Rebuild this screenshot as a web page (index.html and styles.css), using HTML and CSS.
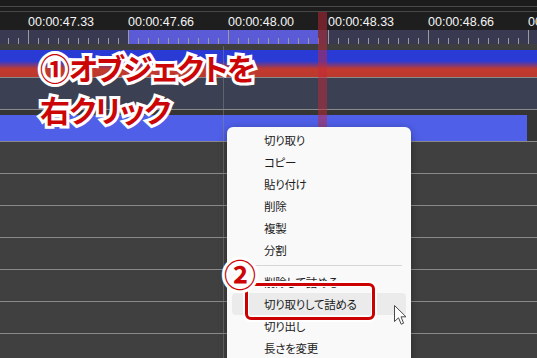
FILE: index.html
```html
<!DOCTYPE html>
<html lang="ja">
<head>
    <meta charset="UTF-8">
    <title>タイムライン - 切り取りして詰める</title>
    <link rel="stylesheet" href="styles.css">
</head>
<body>
    <div class="screen">
        <div class="topbar"></div>

        <div class="timecodes">
            <span class="tc">00:00:47.33</span>
            <span class="tc">00:00:47.66</span>
            <span class="tc">00:00:48.00</span>
            <span class="tc">00:00:48.33</span>
            <span class="tc">00:00:48.66</span>
            <span class="tc">00:0</span>
        </div>
        <div class="ruler"></div>
        <div class="ruler-gap"></div>

        <div class="track track-grad"></div>
        <div class="track track-empty"></div>
        <div class="track track-short">
            <div class="clip"></div>
        </div>

        <div class="row"></div>
        <div class="row"></div>
        <div class="row"></div>
        <div class="row"></div>
        <div class="row"></div>
        <div class="row"></div>
        <div class="row"></div>

        <!-- overlays -->
        <div class="gridline"></div>
        <div class="playhead"></div>

        <div class="note note-1">①オブジェクトを<br>右クリック</div>

        <ul class="menu">
            <li class="item">切り取り</li>
            <li class="item">コピー</li>
            <li class="item">貼り付け</li>
            <li class="item">削除</li>
            <li class="item">複製</li>
            <li class="item">分割</li>
            <li class="sep"></li>
            <li class="item">削除して詰める</li>
            <li class="item hover">切り取りして詰める</li>
            <li class="item">切り出し</li>
            <li class="item">長さを変更</li>
        </ul>

        <div class="mark-box"></div>
        <div class="note note-2">②</div>

        <svg class="cursor" width="14" height="21" viewBox="0 0 14 21">
            <path d="M0.5 0.5 L0.5 16.5 L4.5 12.8 L7.2 19.2 L9.6 18.2 L7 11.8 L12 11.8 Z" fill="#fff" stroke="#4a4a4a" stroke-width="1" stroke-linejoin="round"/>
        </svg>
    </div>
</body>
</html>
```

FILE: styles.css
```css
:root {
    --rule-line: #8a8a8a;
    --row-bg: #404040;
    --note-red: #cc0606;
}

body {
    margin: 0;
    padding: 0;
    background: #1c1c1c;
}

.screen {
    position: relative;
    width: 537px;
    height: 358px;
    overflow: hidden;
    background: #1c1c1c;
    font-family: "Liberation Sans", Arial, sans-serif;
}

.topbar {
    height: 12px;
    box-sizing: border-box;
    border-top: 6px solid #1c1c1c;
    background: linear-gradient(to bottom, #4a4a4a 0, #4a4a4a 1px, #1c1c1c 1px, #1c1c1c 5px, #474747 5px);
}

.timecodes {
    display: flex;
    height: 18px;
    padding-left: 28px;
    box-sizing: border-box;
    background: #1e1e1e;
    color: #f4f4f4;
    font-size: 12.5px;
    line-height: 16px;
    padding-top: 2px;
    white-space: nowrap;
    overflow: hidden;
}

.tc {
    flex: 0 0 100px;
}

.ruler {
    height: 14px;
    background-color: #393a52;
    background-image:
        linear-gradient(to right, #9b9b9b 1px, transparent 1px),
        linear-gradient(to right, #9b9b9b 1px, transparent 1px),
        linear-gradient(to right, transparent 128px, #5b5bd8 128px, #5b5bd8 318px, transparent 318px);
    background-size: 100px 14px, 10px 6px, 537px 14px;
    background-position: 28px 0, 8px 8px, 0 0;
    background-repeat: repeat-x, repeat-x, no-repeat;
}

.ruler-gap {
    height: 6px;
    background: #3e3e3e;
}

.track {
    border-bottom: 1px solid var(--rule-line);
}

.track-grad {
    height: 27px;
    background: linear-gradient(to bottom, #2a3ad4 0, #2a3ad4 11px, #c23a2e 19px, #bb392e 100%);
}

.track-empty {
    height: 31px;
    background: #3b4153;
}

.track-short {
    height: 26px;
    padding-top: 5px;
    background: #353535;
}

.clip {
    width: 527px;
    height: 26px;
    background: #4f5fe8;
}

.row {
    height: 31px;
    background: var(--row-bg);
    border-bottom: 1px solid var(--rule-line);
}

.gridline {
    position: absolute;
    left: 223px;
    top: 46px;
    bottom: 0;
    width: 1px;
    background: rgba(140, 140, 140, 0.45);
}

.playhead {
    position: absolute;
    left: 318px;
    top: 12px;
    bottom: 0;
    width: 9px;
    background: rgba(196, 40, 56, 0.5);
}

.note {
    position: absolute;
    color: var(--note-red);
    font-family: "Noto Sans CJK JP", sans-serif;
    font-weight: 700;
    font-feature-settings: "palt";
    -webkit-text-stroke: 6px #fff;
    paint-order: stroke fill;
    white-space: nowrap;
}

.note-1 {
    left: 40px;
    top: 46px;
    font-size: 30px;
    line-height: 42px;
    letter-spacing: -1px;
}

.note-2 {
    left: 224px;
    top: 257px;
    font-size: 32px;
    line-height: 32px;
}

.menu {
    position: absolute;
    left: 227px;
    top: 127px;
    width: 184px;
    margin: 0;
    padding: 2px 5px 0;
    box-sizing: border-box;
    height: 240px;
    list-style: none;
    background: #f9f9f9;
    border-radius: 6px 6px 0 0;
    box-shadow: 0 2px 8px rgba(0, 0, 0, 0.35);
    font-family: "Noto Sans CJK JP", sans-serif;
    font-feature-settings: "palt";
    font-size: 11.5px;
    letter-spacing: -0.3px;
    color: #1b1b1b;
}

.item {
    height: 22px;
    line-height: 22px;
    padding-left: 32px;
    border-radius: 4px;
}

.item.hover {
    background: #ebebeb;
}

.sep {
    height: 10px;
    margin: 0 4px;
    background: linear-gradient(to bottom, transparent 4px, #d6d6d6 4px, #d6d6d6 5px, transparent 5px);
}

.mark-box {
    position: absolute;
    left: 245px;
    top: 283px;
    width: 130px;
    height: 37px;
    box-sizing: border-box;
    border: 3px solid #cc0000;
    border-radius: 6px;
    box-shadow: 0 0 0 2px #fff, inset 0 0 0 1px #fff;
}

.cursor {
    position: absolute;
    left: 394px;
    top: 305px;
}
```
